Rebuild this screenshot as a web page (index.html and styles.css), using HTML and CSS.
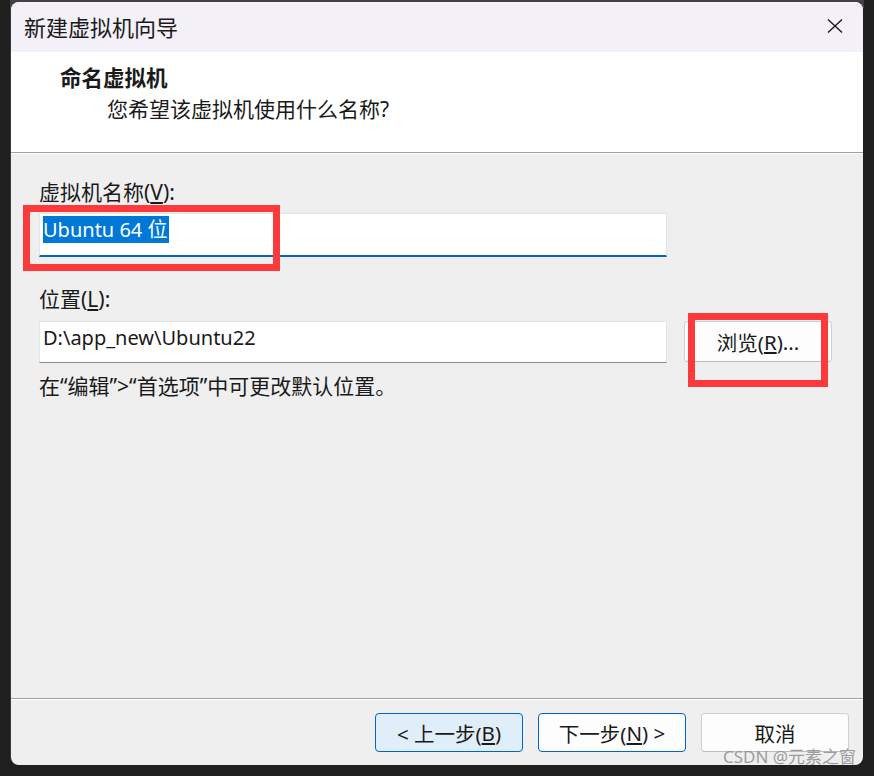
FILE: index.html
```html
<!DOCTYPE html>
<html lang="zh-CN">
<head>
<meta charset="utf-8">
<title>新建虚拟机向导</title>
<link rel="stylesheet" href="styles.css">
</head>
<body>
<div class="topstrip"></div>
<div class="window">
  <div class="titlebar">
    <span class="title">新建虚拟机向导</span>
    <svg class="close" width="16" height="16" viewBox="0 0 16 16"><path d="M1 1.5 L15 14.5 M15 1.5 L1 14.5" stroke="#1a1a1a" stroke-width="1.4" fill="none"/></svg>
  </div>
  <div class="header">
    <div class="h-title">命名虚拟机</div>
    <div class="h-sub">您希望该虚拟机使用什么名称?</div>
  </div>
  <div class="body">
    <div class="label">虚拟机名称(<u>V</u>):</div>
    <div class="textbox active"><span class="sel">Ubuntu 64 位</span></div>
    <div class="label label2">位置(<u>L</u>):</div>
    <div class="row">
      <div class="textbox loc">D:\app_new\Ubuntu22</div>
      <div class="btn browse">浏览(<u>R</u>)...</div>
    </div>
    <div class="hint">在“编辑”&gt;“首选项”中可更改默认位置。</div>
  </div>
  <div class="footer">
    <div class="btn fbtn back">&lt; 上一步(<u>B</u>)</div>
    <div class="btn fbtn next">下一步(<u>N</u>) &gt;</div>
    <div class="btn fbtn cancel">取消</div>
  </div>
  <div class="mark mark1"></div>
  <div class="mark mark2"></div>
</div>
<div class="watermark">CSDN @元素之窗</div>
</body>
</html>
```

FILE: styles.css
```css
html, body {
  margin: 0;
  padding: 0;
}
body {
  width: 874px;
  height: 776px;
  background: #1f1f1f;
  position: relative;
  overflow: hidden;
  font-family: "Noto Sans", "Noto Sans CJK SC", sans-serif;
  color: #1a1a1a;
}
.topstrip {
  position: absolute;
  left: 10px;
  top: 0;
  width: 854px;
  height: 8px;
  background: #424242;
}
.window {
  position: relative;
  margin: 2px 0 0 11px;
  width: 852px;
  height: 763px;
  border-radius: 8px;
  overflow: hidden;
  background: #efefef;
  display: flex;
  flex-direction: column;
  box-shadow: -1px 0 0 #3a3a3a;
}
.titlebar {
  height: 50px;
  flex: none;
  background: #f3f0f8;
  display: flex;
  align-items: center;
  justify-content: space-between;
  padding: 0 20px 0 13px;
}
.title {
  font-size: 22px;
  color: #1a1a1a;
  margin-top: -3px;
}
.close {
  margin-top: -2px;
}
.header {
  flex: none;
  background: #ffffff;
  border-bottom: 1px solid #a0a0a0;
  box-shadow: 0 1px 0 #ffffff;
  box-sizing: border-box;
  height: 101px;
  padding-top: 12px;
}
.h-title {
  font-size: 21.5px;
  font-weight: bold;
  margin-left: 49px;
  line-height: 28px;
}
.h-sub {
  font-size: 21px;
  margin-left: 96px;
  margin-top: 3px;
  line-height: 28px;
}
.body {
  flex: 1;
  padding: 25px 0 0 28px;
  font-size: 21px;
}
.label {
  line-height: 28px;
  height: 28px;
}
.textbox {
  box-sizing: border-box;
  width: 628px;
  background: #ffffff;
  border: 1px solid #e3e3e3;
  border-bottom: 1px solid #8a8a8a;
  padding: 3px 0 0 3px;
  line-height: 26px;
  font-size: 20px;
}
.textbox.active {
  margin-top: 7px;
  height: 44px;
  border-bottom: 2px solid #0067c0;
}
.sel {
  background: #0078d7;
  color: #ffffff;
  padding-right: 1px;
}
.label2 {
  margin-top: 28px;
}
.row {
  margin-top: 8px;
  display: flex;
  gap: 17px;
  align-items: flex-start;
}
.textbox.loc {
  height: 42px;
}
.btn {
  box-sizing: border-box;
  background: #fdfdfd;
  border: 1px solid #d0d0d0;
  border-bottom-color: #bcbcbc;
  border-radius: 4px;
  display: flex;
  align-items: center;
  justify-content: center;
  font-size: 20.5px;
}
.browse {
  width: 148px;
  height: 41px;
}
.hint {
  margin-top: 9px;
  line-height: 28px;
  font-size: 21px;
}
.footer {
  flex: none;
  height: 67px;
  box-sizing: border-box;
  border-top: 1px solid #a0a0a0;
  box-shadow: inset 0 1px 0 #ffffff;
  display: flex;
  justify-content: flex-end;
  gap: 15px;
  padding: 14px 14px 0 0;
}
.fbtn {
  width: 148px;
  height: 39px;
}
.back {
  background: #e0eef9;
  border-color: #0067c0;
}
.next {
  border-color: #0067c0;
}
.mark {
  position: absolute;
  border: 7px solid #fc3a3b;
  box-sizing: border-box;
}
.mark1 {
  left: 12px;
  top: 203px;
  width: 257px;
  height: 66px;
}
.mark2 {
  left: 677px;
  top: 311px;
  width: 140px;
  height: 74px;
}
.watermark {
  position: absolute;
  left: 723px;
  top: 745px;
  font-size: 17px;
  color: rgba(140, 140, 140, 0.85);
  line-height: 24px;
  white-space: nowrap;
}
```
